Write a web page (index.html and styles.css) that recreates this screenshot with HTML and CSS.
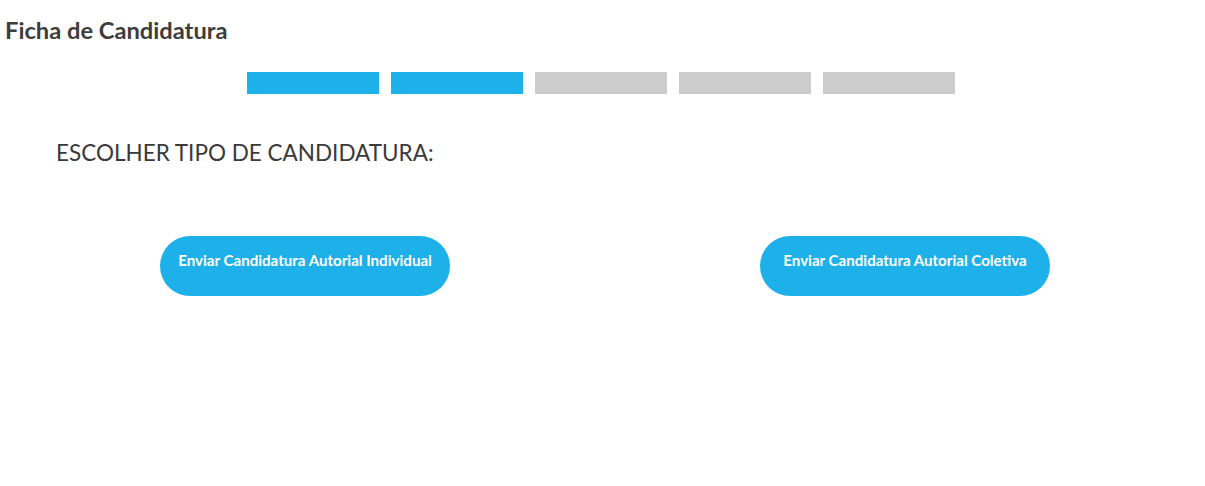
FILE: index.html
```html
<!DOCTYPE html>
<html lang="pt">
<head>
<meta charset="utf-8">
<title>Ficha de Candidatura</title>
<link rel="stylesheet" href="styles.css">
</head>
<body>
<h1 class="title">Ficha de Candidatura</h1>
<div class="steps">
  <span class="step done"></span>
  <span class="step done"></span>
  <span class="step"></span>
  <span class="step"></span>
  <span class="step"></span>
</div>
<h2 class="subtitle">ESCOLHER TIPO DE CANDIDATURA:</h2>
<div class="choices">
  <div class="col"><button class="btn">Enviar Candidatura Autorial Individual</button></div>
  <div class="col"><button class="btn">Enviar Candidatura Autorial Coletiva</button></div>
</div>
</body>
</html>
```
FILE: styles.css
```css
html, body { margin: 0; padding: 0; background: #fff; }
body {
  font-family: Lato, "Open Sans", sans-serif;
  color: #3a3a3a;
  padding: 0 0 0 5px;
}
.title {
  margin: 0;
  padding-top: 15px;
  font-size: 23.7px;
  font-weight: 700;
  line-height: 30px;
  color: #3d3d3d;
}
.steps {
  display: flex;
  justify-content: center;
  gap: 12px;
  margin: 27px 4px 0 -4px;
}
.step {
  width: 132px;
  height: 22px;
  background: #cccccc;
}
.step.done { background: #1eb0e8; }
.subtitle {
  margin: 45px 0 0 51px;
  font-size: 22.5px;
  font-weight: 400;
  line-height: 28px;
  color: #3a3a3a;
}
.choices {
  display: grid;
  grid-template-columns: 1fr 1fr;
  margin-top: 69px;
}
.col { display: flex; justify-content: center; }
.btn {
  width: 290px;
  height: 60px;
  border: none;
  border-radius: 30px;
  background: #1eb0e8;
  color: #fff;
  font-family: Lato, "Open Sans", sans-serif;
  font-weight: 700;
  font-size: 15.1px;
  padding: 0 0 13px;
}
```
